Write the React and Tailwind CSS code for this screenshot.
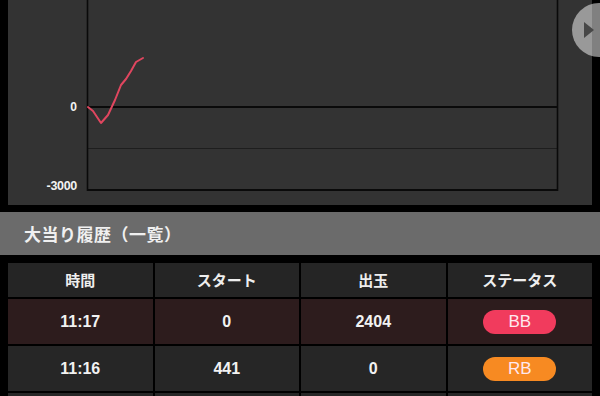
import React from 'react';

const rows = [
    { time: '11:17', start: '0', out: '2404', status: 'BB', bg: 'bg-[#2d1c1d]' },
    { time: '11:16', start: '441', out: '0', status: 'RB', bg: 'bg-[#262626]' },
    { time: '', start: '', out: '', status: '', bg: 'bg-[#262626]' },
];

const badgeColor = {
    BB: 'bg-[#f13b5d]',
    RB: 'bg-[#f78a22]',
};

const Chart = () => (
    <svg width="584" height="205" viewBox="0 0 584 205" className="block">
        {/* grid */}
        <line x1="80" y1="148.5" x2="550" y2="148.5" stroke="#1e1e1e" strokeWidth="1" />
        <line x1="80" y1="107" x2="550" y2="107" stroke="#0a0a0a" strokeWidth="2" />
        <line x1="80" y1="190" x2="550" y2="190" stroke="#0a0a0a" strokeWidth="2" />
        <line x1="79.5" y1="0" x2="79.5" y2="191" stroke="#0a0a0a" strokeWidth="1.6" />
        <line x1="549.5" y1="0" x2="549.5" y2="191" stroke="#0a0a0a" strokeWidth="1.6" />
        {/* labels */}
        <text x="69" y="111" textAnchor="end" fill="#f2f2f2" fontSize="12" fontWeight="700"
              fontFamily="'Liberation Sans', Arial, sans-serif">0</text>
        <text x="69" y="190" textAnchor="end" fill="#f2f2f2" fontSize="12.5" fontWeight="700"
              fontFamily="'Liberation Sans', Arial, sans-serif" letterSpacing="-0.3">-3000</text>
        {/* data */}
        <polyline
            points="80,107 85,111 93,123 100,115 107,100 113,85 118,79 123,71 128,62 135,58"
            fill="none" stroke="#e0465f" strokeWidth="2" strokeLinejoin="round" strokeLinecap="round" />
    </svg>
);

export default function App() {
    return (
        <div className="relative w-[600px] h-[396px] bg-black overflow-hidden font-['Liberation_Sans','Noto_Sans_CJK_JP',sans-serif]">
            <div className="mx-2 h-[205px] bg-[#333333]">
                <Chart />
            </div>

            <div className="mt-[7px] h-[43px] bg-[#6b6b6b] flex items-center pl-6">
                <span className="text-[17px] font-bold text-[#f0f0f0] font-['Noto_Sans_CJK_JP',sans-serif] tracking-[0.5px]">
                    大当り履歴（一覧）
                </span>
            </div>

            <div className="mt-2 mx-2 flex flex-col gap-y-[2px]">
                <div className="grid grid-cols-4 gap-x-[2px] h-[34px]">
                    {['時間', 'スタート', '出玉', 'ステータス'].map((h) => (
                        <div key={h}
                             className="bg-[#252525] flex items-center justify-center text-[15px] font-bold text-[#eeeeee] font-['Noto_Sans_CJK_JP',sans-serif]">
                            {h}
                        </div>
                    ))}
                </div>
                {rows.map((r, i) => (
                    <div key={i} className="grid grid-cols-4 gap-x-[2px] h-[45px]">
                        <div className={`${r.bg} flex items-center justify-center text-[16px] font-bold text-[#f2f2f2]`}>{r.time}</div>
                        <div className={`${r.bg} flex items-center justify-center text-[16px] font-bold text-[#f2f2f2]`}>{r.start}</div>
                        <div className={`${r.bg} flex items-center justify-center text-[16px] font-bold text-[#f2f2f2]`}>{r.out}</div>
                        <div className={`${r.bg} flex items-center justify-center`}>
                            {r.status && (
                                <span className={`${badgeColor[r.status]} w-[73px] h-[24px] rounded-full flex items-center justify-center text-[17px] text-[#ffe8ee]`}>
                                    {r.status}
                                </span>
                            )}
                        </div>
                    </div>
                ))}
            </div>

            {/* next button */}
            <button
                type="button"
                className="absolute left-[572px] top-[3px] w-[54px] h-[54px] rounded-full bg-white/50 flex items-center pl-[12px]"
            >
                <svg width="10" height="16" viewBox="0 0 10 16">
                    <polygon points="0,0 10,8 0,16" fill="#474747" />
                </svg>
            </button>
        </div>
    );
}
